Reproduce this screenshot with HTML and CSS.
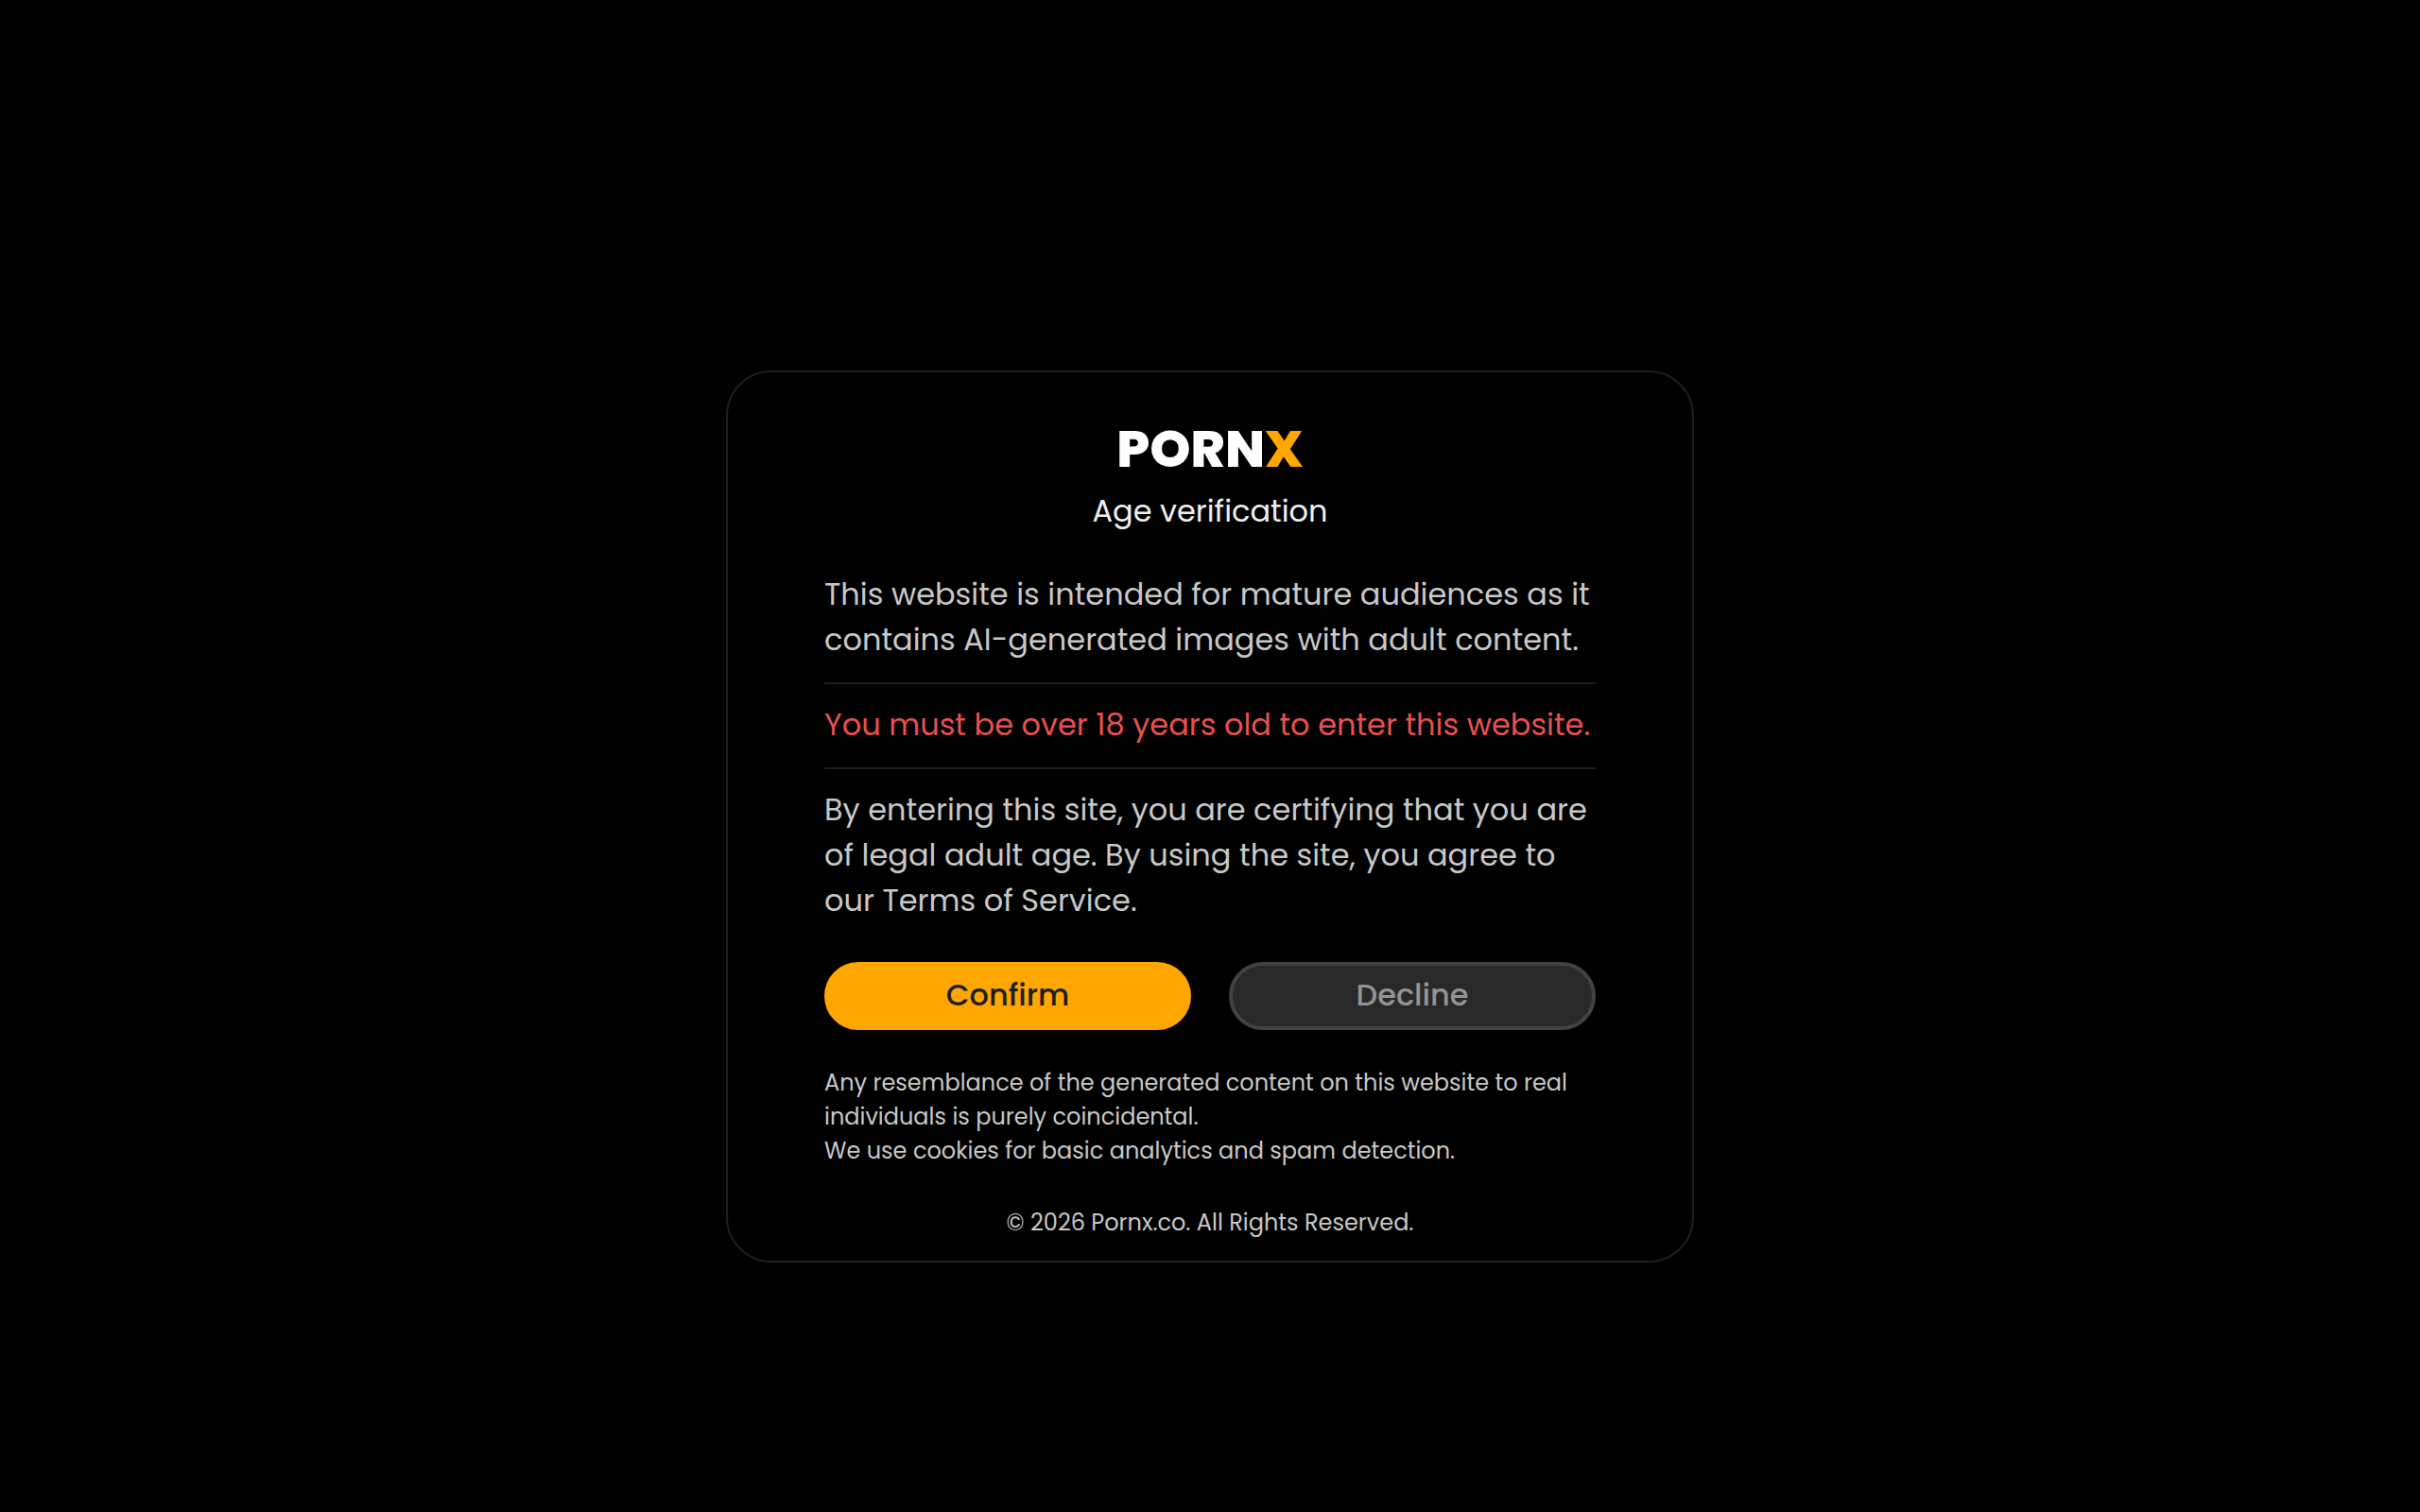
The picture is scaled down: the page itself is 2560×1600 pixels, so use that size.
FILE: index.html
```html
<!DOCTYPE html>
<html lang="en">
<head>
    <meta charset="UTF-8">
    <meta name="viewport" content="width=device-width, initial-scale=1.0">
    <title>Age verification - Pornx.co</title>
    <link rel="stylesheet" href="styles.css">
</head>
<body>
    <main class="age-card">
        <h1 class="logo">PORN<span class="logo-x">X</span></h1>
        <h2 class="subtitle">Age verification</h2>

        <div class="notice">
            <p>This website is intended for mature audiences as it contains AI-generated images with adult content.</p>
            <p class="warning">You must be over 18 years old to enter this website.</p>
            <p>By entering this site, you are certifying that you are of legal adult age. By using the site, you agree to our <a href="#">Terms of Service</a>.</p>
        </div>

        <div class="actions">
            <button type="button" class="btn btn-confirm">Confirm</button>
            <button type="button" class="btn btn-decline">Decline</button>
        </div>

        <div class="disclaimer">
            <p>Any resemblance of the generated content on this website to real individuals is purely coincidental.</p>
            <p>We use cookies for basic analytics and spam detection.</p>
        </div>

        <footer class="copyright">© 2026 Pornx.co. All Rights Reserved.</footer>
    </main>
</body>
</html>
```
FILE: styles.css
```css
:root {
    --bg-color: #000;
    --line-color: #1e1e1e;
    --text-color: #c8c8c8;
    --heading-color: #eee;
    --accent-color: #ffa600;
    --warning-color: #e85050;
}

* {
    box-sizing: border-box;
}

body {
    margin: 0;
    min-height: 100vh;
    padding-top: 128px;
    display: flex;
    justify-content: center;
    align-items: center;
    background-color: var(--bg-color);
    color: var(--text-color);
    font-family: Poppins, Inter, sans-serif;
    font-size: 32px;
    line-height: 48px;
}

h1, h2, p {
    margin: 0;
}

a {
    color: inherit;
    text-decoration: none;
}

.age-card {
    width: 100%;
    max-width: 1024px;
    padding: 49px 102px 22px;
    border: 2px solid var(--line-color);
    border-radius: 48px;
}

.logo {
    color: #fff;
    font-size: 55px;
    font-weight: 800;
    line-height: 64px;
    text-align: center;
}

.logo-x {
    color: var(--accent-color);
}

.subtitle {
    margin: 10px 0 40px;
    color: var(--heading-color);
    font-size: 32px;
    font-weight: 400;
    text-align: center;
}

.warning {
    margin: 21px 0 19px;
    padding: 19px 0 21px;
    border-top: 2px solid var(--line-color);
    border-bottom: 2px solid var(--line-color);
    color: var(--warning-color);
}

.actions {
    display: flex;
    gap: 40px;
    margin: 41px 0 38px;
}

.btn {
    flex: 1;
    height: 72px;
    padding: 0 0 2px;
    border: 4px solid var(--accent-color);
    border-radius: 36px;
    font-family: inherit;
    font-size: 32px;
    font-weight: 500;
    cursor: pointer;
}

.btn-confirm {
    background-color: var(--accent-color);
    color: #1e1e1e;
}

.btn-decline {
    background-color: #292929;
    border-color: #424242;
    color: #949494;
}

.disclaimer,
.copyright {
    font-size: 24px;
    line-height: 36px;
}

.copyright {
    margin-top: 40px;
    text-align: center;
}
```
